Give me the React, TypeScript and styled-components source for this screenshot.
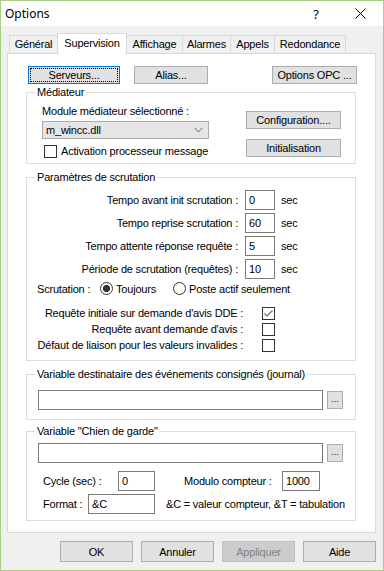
import React from "react";
import styled, { createGlobalStyle } from "styled-components";

const Global = createGlobalStyle`
  html, body { margin: 0; padding: 0; background: #fff; }
  body { font-family: "Liberation Sans", Arial, sans-serif; font-size: 11px; color: #000; letter-spacing: -0.2px; }
  * { box-sizing: border-box; }
`;

const Window = styled.div`
  width: 384px;
  height: 571px;
  border: 1px solid #a9cf86;
  background: #f0f0f0;
  display: flex;
  flex-direction: column;
`;

const TitleBar = styled.div`
  height: 25px;
  background: #fff;
  display: flex;
  align-items: center;
  padding-left: 4px;
  font-family: "Noto Sans", "Open Sans", sans-serif;
  font-size: 12px;
  letter-spacing: 0;
`;

const TitleText = styled.span`
  flex: 1;
`;

const HelpGlyph = styled.span`
  font-size: 13px;
  margin-right: 36px;
`;

const CloseBox = styled.span`
  display: flex;
  margin-right: 17px;
`;

const Body = styled.div`
  flex: 1;
  display: flex;
  flex-direction: column;
  padding: 0 7px 0 6px;
`;

const TabsRow = styled.div`
  margin-top: 7px;
  height: 20px;
  display: flex;
  align-items: flex-end;
  padding-left: 2px;
`;

const Tab = styled.div<{ $w: number; $active?: boolean }>`
  width: ${(p) => p.$w}px;
  height: ${(p) => (p.$active ? 21 : 18)}px;
  margin-left: -1px;
  margin-bottom: ${(p) => (p.$active ? -1 : 0)}px;
  border: 1px solid #d9d9d9;
  border-bottom: none;
  background: ${(p) => (p.$active ? "#fff" : "#f0f0f0")};
  display: flex;
  justify-content: center;
  padding-top: ${(p) => (p.$active ? 3 : 2)}px;
  position: relative;
  z-index: ${(p) => (p.$active ? 2 : 1)};
  &:first-child { margin-left: 0; }
`;

const Panel = styled.div`
  height: 480px;
  background: #fff;
  border: 1px solid #d9d9d9;
  display: flex;
  flex-direction: column;
  padding: 0 19px 0 18px;
`;

const TopRow = styled.div`
  margin-top: 12px;
  margin-right: -1px;
  display: flex;
  align-items: center;
`;

const Button = styled.button<{ $w: number; $h?: number; $ml?: number; $focus?: boolean }>`
  width: ${(p) => p.$w}px;
  height: ${(p) => p.$h ?? 18}px;
  margin: 0 0 0 ${(p) => p.$ml ?? 0}px;
  padding: 0;
  background: #e1e1e1;
  border: 1px solid ${(p) => (p.$focus ? "#0078d7" : "#adadad")};
  outline: ${(p) => (p.$focus ? "1px dotted #000" : "none")};
  outline-offset: -3px;
  font-family: inherit;
  font-size: 11px;
  letter-spacing: -0.2px;
  color: #000;
  text-align: center;
  flex-shrink: 0;
  &:disabled {
    background: #cccccc;
    border-color: #bfbfbf;
    color: #838383;
  }
`;

const PushRight = styled.div`
  flex: 1;
`;

const Group = styled.fieldset<{ $mt: number }>`
  margin: ${(p) => p.$mt}px 0 0 0;
  padding: 0;
  border: 1px solid #dcdcdc;
  min-width: 0;
  width: 330px;
`;

const Legend = styled.legend`
  margin-left: 8px;
  padding: 0 2px;
  line-height: 13px;
  font-size: 11px;
`;

const MediatorContent = styled.div`
  display: flex;
  padding: 6px 0 5px 15px;
`;

const LeftCol = styled.div`
  width: 167px;
  display: flex;
  flex-direction: column;
`;

const Text = styled.span`
  line-height: 13px;
  white-space: nowrap;
`;

const Combo = styled.div`
  margin-top: 3px;
  height: 18px;
  width: 167px;
  background: #e5e5e5;
  border: 1px solid #acacac;
  display: flex;
  align-items: center;
  justify-content: space-between;
  padding: 0 5px 0 3px;
`;

const CheckRow = styled.label<{ $mt?: number; $ml?: number }>`
  margin-top: ${(p) => p.$mt ?? 0}px;
  margin-left: ${(p) => p.$ml ?? 0}px;
  display: flex;
  align-items: center;
  height: 13px;
  gap: 4px;
`;

const Box = styled.span`
  width: 13px;
  height: 13px;
  border: 1px solid #333;
  background: #fff;
  display: flex;
  align-items: center;
  justify-content: center;
  flex-shrink: 0;
`;

const RightCol = styled.div`
  margin-left: 37px;
  padding-top: 6px;
  display: flex;
  flex-direction: column;
  gap: 10px;
`;

const ParamsContent = styled.div`
  display: flex;
  flex-direction: column;
  padding: 6px 0 7px 0;
`;

const ParamRow = styled.div<{ $mt?: number }>`
  display: flex;
  align-items: center;
  height: 20px;
  margin-top: ${(p) => p.$mt ?? 0}px;
`;

const RightLabel = styled.span<{ $w: number }>`
  width: ${(p) => p.$w}px;
  text-align: right;
  white-space: nowrap;
  flex-shrink: 0;
`;

const Input = styled.div<{ $w: number; $ml?: number }>`
  width: ${(p) => p.$w}px;
  height: 20px;
  margin-left: ${(p) => p.$ml ?? 0}px;
  border: 1px solid #7a7a7a;
  background: #fff;
  display: flex;
  align-items: center;
  padding-left: 3px;
  flex-shrink: 0;
`;

const Unit = styled.span`
  margin-left: 6px;
`;

const RadioRow = styled.div`
  margin-top: 3px;
  height: 13px;
  display: flex;
  align-items: center;
  padding-left: 10px;
`;

const FixedLabel = styled.span<{ $w: number; $ml?: number }>`
  width: ${(p) => p.$w}px;
  margin-left: ${(p) => p.$ml ?? 0}px;
  white-space: nowrap;
  flex-shrink: 0;
`;

const RadioOption = styled.label<{ $w?: number }>`
  display: flex;
  align-items: center;
  gap: 3px;
  width: ${(p) => (p.$w ? `${p.$w}px` : "auto")};
  white-space: nowrap;
`;

const Radio = styled.span<{ $checked?: boolean }>`
  width: 13px;
  height: 13px;
  border-radius: 50%;
  border: 1px solid #333;
  background: ${(p) =>
    p.$checked ? "radial-gradient(circle, #333 0 3.3px, #fff 3.9px)" : "#fff"};
  flex-shrink: 0;
`;

const CheckList = styled.div`
  margin-top: 10px;
  display: flex;
  flex-direction: column;
`;

const CheckLine = styled.div`
  height: 16px;
  display: flex;
  align-items: center;
`;

const BoxSpacer = styled.span`
  margin-left: 19px;
  display: flex;
`;

const VarContent = styled.div<{ $pt: number; $pb: number }>`
  display: flex;
  flex-direction: column;
  padding: ${(p) => p.$pt}px 0 ${(p) => p.$pb}px 11px;
`;

const InputRow = styled.div`
  display: flex;
  align-items: center;
`;

const DotsButton = styled.button`
  width: 16px;
  height: 18px;
  margin: 0 0 0 4px;
  padding: 0 0 4px 0;
  background: #e1e1e1;
  border: 1px solid #adadad;
  font-family: inherit;
  font-size: 9px;
  letter-spacing: 0;
  color: #000;
  display: flex;
  align-items: flex-end;
  justify-content: center;
`;

const FieldRow = styled.div<{ $mt: number }>`
  margin-top: ${(p) => p.$mt}px;
  padding-left: 5px;
  display: flex;
  align-items: center;
  height: 20px;
`;

const Hint = styled.span`
  margin-left: 11px;
  white-space: nowrap;
`;

const Footer = styled.div`
  margin-top: 8px;
  display: flex;
  justify-content: flex-end;
  gap: 8px;
`;

const Chevron = () => (
  <svg width="9" height="6" viewBox="0 0 9 6">
    <polyline points="0.5,0.8 4.5,4.8 8.5,0.8" fill="none" stroke="#606060" strokeWidth="1" />
  </svg>
);

const CheckMark = () => (
  <svg width="11" height="11" viewBox="0 0 11 11">
    <polyline points="1.5,5.5 4,8 9.5,2.5" fill="none" stroke="#6d6d6d" strokeWidth="1.2" />
  </svg>
);

const CloseIcon = () => (
  <svg width="11" height="11" viewBox="0 0 11 11">
    <path d="M0.5 0.5 L10.5 10.5 M10.5 0.5 L0.5 10.5" stroke="#000" strokeWidth="1" />
  </svg>
);

const tabs: [string, number][] = [
  ["Général", 49],
  ["Supervision", 70],
  ["Affichage", 57],
  ["Alarmes", 49],
  ["Appels", 45],
  ["Redondance", 72],
];

const params: [string, string][] = [
  ["Tempo avant init scrutation :", "0"],
  ["Tempo reprise scrutation :", "60"],
  ["Tempo attente réponse requête :", "5"],
  ["Période de scrutation (requêtes) :", "10"],
];

const checks: [string, boolean][] = [
  ["Requête initiale sur demande d'avis DDE :", true],
  ["Requête avant demande d'avis :", false],
  ["Défaut de liaison pour les valeurs invalides :", false],
];

export default function App() {
  return (
    <>
      <Global />
      <Window>
        <TitleBar>
          <TitleText>Options</TitleText>
          <HelpGlyph>?</HelpGlyph>
          <CloseBox>
            <CloseIcon />
          </CloseBox>
        </TitleBar>
        <Body>
          <TabsRow>
            {tabs.map(([t, w]) => (
              <Tab key={t} $w={w} $active={t === "Supervision"}>
                {t}
              </Tab>
            ))}
          </TabsRow>
          <Panel>
            <TopRow>
              <Button $w={92} $ml={2} $focus>
                Serveurs...
              </Button>
              <Button $w={74} $ml={14}>
                Alias...
              </Button>
              <PushRight />
              <Button $w={85}>Options OPC ...</Button>
            </TopRow>

            <Group $mt={2}>
              <Legend>Médiateur</Legend>
              <MediatorContent>
                <LeftCol>
                  <Text>Module médiateur sélectionné :</Text>
                  <Combo>
                    <span>m_wincc.dll</span>
                    <Chevron />
                  </Combo>
                  <CheckRow $mt={6} $ml={2}>
                    <Box />
                    <Text>Activation processeur message</Text>
                  </CheckRow>
                </LeftCol>
                <RightCol>
                  <Button $w={95}>Configuration....</Button>
                  <Button $w={95}>Initialisation</Button>
                </RightCol>
              </MediatorContent>
            </Group>

            <Group $mt={7}>
              <Legend>Paramètres de scrutation</Legend>
              <ParamsContent>
                {params.map(([label, v], i) => (
                  <ParamRow key={label} $mt={i === 0 ? 0 : 3}>
                    <RightLabel $w={211}>{label}</RightLabel>
                    <Input $w={30} $ml={7}>
                      {v}
                    </Input>
                    <Unit>sec</Unit>
                  </ParamRow>
                ))}
                <RadioRow>
                  <FixedLabel $w={63}>Scrutation :</FixedLabel>
                  <RadioOption $w={73}>
                    <Radio $checked />
                    Toujours
                  </RadioOption>
                  <RadioOption>
                    <Radio />
                    Poste actif seulement
                  </RadioOption>
                </RadioRow>
                <CheckList>
                  {checks.map(([label, on]) => (
                    <CheckLine key={label}>
                      <RightLabel $w={216}>{label}</RightLabel>
                      <BoxSpacer>
                        <Box>{on && <CheckMark />}</Box>
                      </BoxSpacer>
                    </CheckLine>
                  ))}
                </CheckList>
              </ParamsContent>
            </Group>

            <Group $mt={7}>
              <Legend>Variable destinataire des événements consignés (journal)</Legend>
              <VarContent $pt={9} $pb={9}>
                <InputRow>
                  <Input $w={285} />
                  <DotsButton>...</DotsButton>
                </InputRow>
              </VarContent>
            </Group>

            <Group $mt={5}>
              <Legend>Variable "Chien de garde"</Legend>
              <VarContent $pt={5} $pb={6}>
                <InputRow>
                  <Input $w={285} />
                  <DotsButton>...</DotsButton>
                </InputRow>
                <FieldRow $mt={8}>
                  <FixedLabel $w={75}>Cycle (sec) :</FixedLabel>
                  <Input $w={37}>0</Input>
                  <FixedLabel $w={98} $ml={29}>
                    Modulo compteur :
                  </FixedLabel>
                  <Input $w={38}>1000</Input>
                </FieldRow>
                <FieldRow $mt={3}>
                  <FixedLabel $w={45}>Format :</FixedLabel>
                  <Input $w={67}>&amp;C</Input>
                  <Hint>&amp;C = valeur compteur, &amp;T = tabulation</Hint>
                </FieldRow>
              </VarContent>
            </Group>
          </Panel>
          <Footer>
            <Button $w={73} $h={21}>OK</Button>
            <Button $w={73} $h={21}>Annuler</Button>
            <Button $w={73} $h={21} disabled>
              Appliquer
            </Button>
            <Button $w={73} $h={21}>Aide</Button>
          </Footer>
        </Body>
      </Window>
    </>
  );
}
